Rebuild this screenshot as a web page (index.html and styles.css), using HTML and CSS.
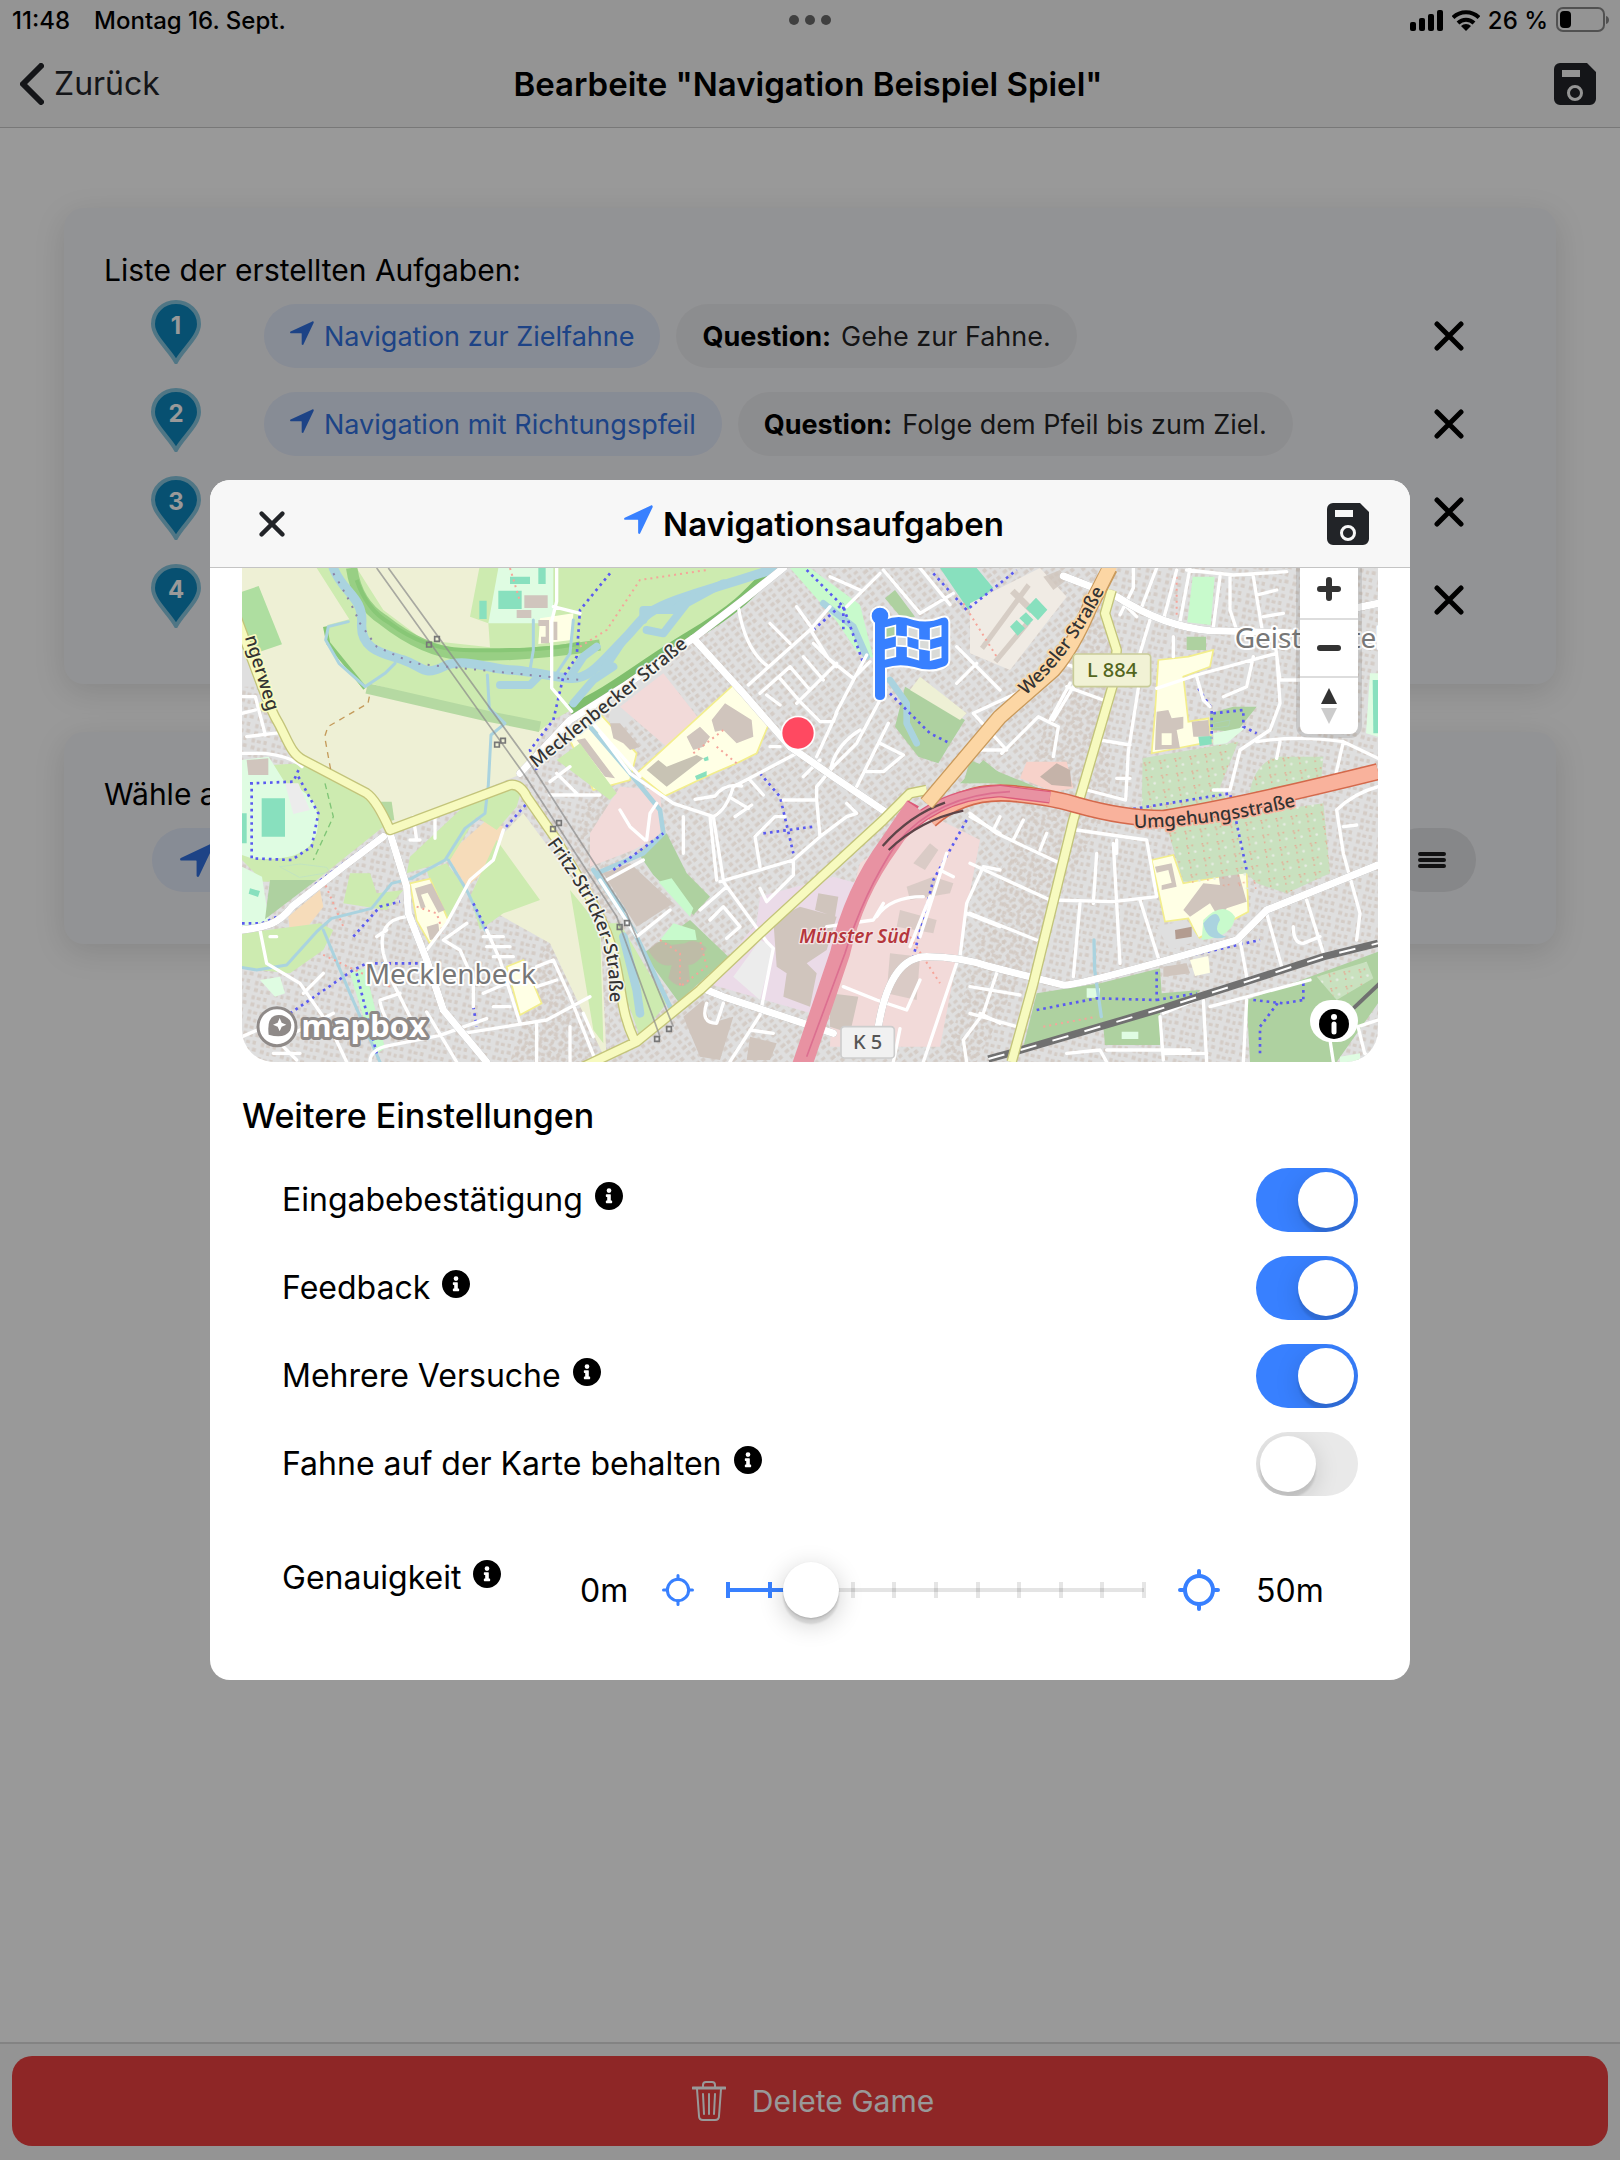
FILE: index.html
```html
<!DOCTYPE html>
<html lang="de">
<head>
<meta charset="utf-8">
<meta name="viewport" content="width=device-width, initial-scale=1">
<title>Bearbeite "Navigation Beispiel Spiel"</title>
<link rel="stylesheet" href="styles.css">
</head>
<body>
<svg class="defs" aria-hidden="true">
  <symbol id="i-nav" viewBox="0 0 24 24"><path d="M22.300.400.600 10.600c-.9.400-.6 1.700.4 1.700h10.300c.2 0 .4.200.4.400V23c0 1 1.300 1.300 1.700.4L23.700 1.800C24 .900 23.200 0 22.300.400z"/></symbol>
  <symbol id="i-close" viewBox="0 0 30 30"><path d="M3 3l24 24M27 3L3 27" fill="none" stroke="currentColor" stroke-width="5" stroke-linecap="round"/></symbol>
  <symbol id="i-save" viewBox="0 0 42 42"><path fill-rule="evenodd" d="M6 0h27l9 9v27a6 6 0 0 1-6 6H6a6 6 0 0 1-6-6V6a6 6 0 0 1 6-6zM8 7v7h18V7zM21 22a8 8 0 1 0 0 16 8 8 0 0 0 0-16zm0 3a5 5 0 1 1 0 10 5 5 0 0 1 0-10z"/></symbol>
  <symbol id="i-info" viewBox="8 8 496 496"><path d="M256 8C119 8 8 119 8 256s111 248 248 248 248-111 248-248S393 8 256 8zm0 110a42 42 0 1 1 0 84 42 42 0 0 1 0-84zm56 254c0 7-5 12-12 12h-88c-7 0-12-5-12-12v-24c0-7 5-12 12-12h12v-64h-12c-7 0-12-5-12-12v-24c0-7 5-12 12-12h64c7 0 12 5 12 12v100h12c7 0 12 5 12 12z"/></symbol>
  <symbol id="i-aim" viewBox="0 0 42 42"><g fill="none" stroke="currentColor" stroke-width="4" stroke-linecap="round"><circle cx="21" cy="21" r="14"/><path d="M21 2v5M21 35v5M2 21h5M35 21h5"/></g></symbol>
  <symbol id="i-pin" viewBox="0 0 52 64"><path d="M26 2C13 2 3 12 3 24c0 13 16 25 23 38 7-13 23-25 23-38C49 12 39 2 26 2z" fill="#0d86bc" stroke="#85c5de" stroke-width="4"/></symbol>
</svg>

<header class="topbar">
  <div class="status">
    <span>11:48</span><span class="date">Montag 16. Sept.</span>
    <svg class="dots" viewBox="0 0 42 10" width="42" height="10"><circle cx="5" cy="5" r="5"/><circle cx="21" cy="5" r="5"/><circle cx="37" cy="5" r="5"/></svg>
    <div class="signals">
      <svg viewBox="0 0 34 21" width="34" height="21"><rect y="12" width="6" height="9" rx="2"/><rect x="9" y="8" width="6" height="13" rx="2"/><rect x="18" y="4" width="6" height="17" rx="2"/><rect x="27" width="6" height="21" rx="2"/></svg>
      <svg viewBox="0 0 28 21" width="28" height="21"><g fill="none" stroke="#000" stroke-width="4"><path d="M1 7.500a18.500 18.500 0 0 1 26 0"/><path d="M6 13a11.500 11.500 0 0 1 16 0"/></g><path d="M14 21l-5-5a7 7 0 0 1 10 0z"/></svg>
      <span>26 %</span>
      <svg viewBox="0 0 54 26" width="54" height="26"><rect x="1" y="1" width="47" height="23" rx="6" fill="none" stroke="#888" stroke-width="2"/><rect x="4" y="4" width="11" height="17" rx="4"/><path d="M50 9c4 1 4 7 0 8z" fill="#888"/></svg>
    </div>
  </div>
  <div class="toolbar">
    <button class="plain back" type="button"><svg viewBox="0 0 24 42" width="24" height="42"><path d="M21 3L3 21l18 18" fill="none" stroke="currentColor" stroke-width="6" stroke-linecap="round" stroke-linejoin="round"/></svg>Zurück</button>
    <h1>Bearbeite "Navigation Beispiel Spiel"</h1>
    <button class="plain end" type="button" aria-label="Speichern"><svg width="42" height="42"><use href="#i-save"/></svg></button>
  </div>
</header>

<main class="page">
  <section class="card">
    <h2>Liste der erstellten Aufgaben:</h2>
    <ol class="tasks">
      <li><span class="pin"><svg width="52" height="64"><use href="#i-pin"/></svg><b>1</b></span>
        <span class="chip blue"><svg width="24" height="24"><use href="#i-nav"/></svg>Navigation zur Zielfahne</span>
        <span class="chip"><b>Question:</b> Gehe zur Fahne.</span>
        <button class="plain remove" type="button" aria-label="Entfernen"><svg width="30" height="30"><use href="#i-close"/></svg></button></li>
      <li><span class="pin"><svg width="52" height="64"><use href="#i-pin"/></svg><b>2</b></span>
        <span class="chip blue"><svg width="24" height="24"><use href="#i-nav"/></svg>Navigation mit Richtungspfeil</span>
        <span class="chip"><b>Question:</b> Folge dem Pfeil bis zum Ziel.</span>
        <button class="plain remove" type="button" aria-label="Entfernen"><svg width="30" height="30"><use href="#i-close"/></svg></button></li>
      <li><span class="pin"><svg width="52" height="64"><use href="#i-pin"/></svg><b>3</b></span>
        <button class="plain remove" type="button" aria-label="Entfernen"><svg width="30" height="30"><use href="#i-close"/></svg></button></li>
      <li><span class="pin"><svg width="52" height="64"><use href="#i-pin"/></svg><b>4</b></span>
        <button class="plain remove" type="button" aria-label="Entfernen"><svg width="30" height="30"><use href="#i-close"/></svg></button></li>
    </ol>
  </section>
  <section class="card">
    <h2>Wähle a</h2>
    <div class="picker">
      <button class="chip blue" type="button" aria-label="Navigation"><svg width="34" height="34"><use href="#i-nav"/></svg></button>
      <button class="chip menu" type="button" aria-label="Menü"><svg viewBox="0 0 28 16" width="28" height="16"><path d="M2 2h24M2 8h24M2 14h24" stroke="currentColor" stroke-width="4" stroke-linecap="round"/></svg></button>
    </div>
  </section>
</main>

<footer class="footer">
  <button class="delete" type="button"><svg class="line" viewBox="0 0 34 40" width="34" height="40" stroke="currentColor" stroke-width="2" stroke-linecap="round"><path d="M1 7h32" stroke-width="3"/><path d="M5 8l2 27q0 4 4 4h12q4 0 4-4l2-27M11 6V4q0-3 3-3h6q3 0 3 3v2M17 13v20M11 13l1 20M23 13l-1 20"/></svg>Delete Game</button>
</footer>

<div class="backdrop">
<div class="modal" role="dialog" aria-labelledby="dialog-title">
  <div class="modal-head">
    <button class="plain" type="button" aria-label="Schließen"><svg width="26" height="26"><use href="#i-close"/></svg></button>
    <h2 id="dialog-title"><svg width="29" height="29"><use href="#i-nav"/></svg>Navigationsaufgaben</h2>
    <button class="plain end" type="button" aria-label="Speichern"><svg width="42" height="42"><use href="#i-save"/></svg></button>
  </div>
  <div class="modal-body">
    <div class="map">
      <svg class="tiles" viewBox="96 24 3408 1482" preserveAspectRatio="xMidYMid slice">
        <defs>
          <pattern id="houses-a" width="46" height="62" patternUnits="userSpaceOnUse" patternTransform="rotate(-40)"><path d="M4 4h14v10H4zM24 6h12v12H24zM6 24h12v12H6zM27 30h13v9H27zM4 46h16v10H4zM26 48h12v10H26z" fill="#d0c5bd" opacity=".75"/></pattern>
          <pattern id="houses-b" width="62" height="44" patternUnits="userSpaceOnUse" patternTransform="rotate(14)"><path d="M4 4h10v12H4zM20 5h12v10H20zM40 3h10v12H40zM6 25h12v12H6zM26 27h9v11h-9zM43 24h12v11H43z" fill="#d0c5bd" opacity=".75"/></pattern>
          <pattern id="plots" width="46" height="44" patternUnits="userSpaceOnUse" patternTransform="rotate(-8)"><path d="M4 8h30M8 12v28" fill="none" stroke="#ee9a86" stroke-width="4" stroke-dasharray="5 10" opacity=".8"/><circle cx="28" cy="28" r="4" fill="#e6ece2"/></pattern>
        </defs>
        <rect x="96" y="24" width="3408" height="1482" fill="#dfdfdf"/>
        <path d="M900 1506L1170 600 1600 24H2700V720L2300 1506z" fill="url(#houses-a)"/>
        <path d="M96 380H1200V1506H96zM2650 24H3504V1506H2200z" fill="url(#houses-b)"/>

        <g class="land">
          <path fill="#eef0d5" d="M96 24H900L1080 260 1000 520 940 640 540 800 460 700 280 600 200 480 96 220z"/>
          <path fill="#cdebb0" d="M320 24H440L520 150 640 240 840 262 835 190 780 170 808 24H1680L1440 250 1030 480 985 515 480 370 460 390 345 235 352 195 418 178z"/>
          <path fill="#aedea0" d="M96 95l50-17 70 175-75 25-45-80z"/>
          <path fill="none" stroke="#98cf84" stroke-width="34" d="M425 24Q440 130 520 180 640 275 760 285 940 290 1170 255"/>
          <path fill="none" stroke="#88c776" stroke-width="12" d="M440 60Q470 150 540 190 640 265 760 270 1000 275 1110 250M345 200l10 50 110 135"/>
          <path fill="none" stroke="#7fbe6d" stroke-width="34" d="M1080 450C1200 400 1290 320 1440 230S1620 100 1690 24"/>
          <path fill="none" stroke="#b5d9a2" stroke-width="32" d="M470 385L840 470 990 500"/>
          <path fill="#b5d9a2" d="M510 725h35l8 55-20 5z"/>
          <path fill="#dffce2" d="M865 24H1030V190H835z"/><path fill="#88e0be" d="M865 92h70v55h-70zM900 50h60v22h-60zM985 24h22v48h-22zM808 122h22v55h-22z"/><path fill="#d0c5bd" d="M943 106h70v38h-70zM920 150h44v24h-44z"/>
          <path fill="#ffffe5" d="M990 175l100-15-5 80-100 12z"/><path fill="#d0c5bd" d="M985 180h32v70h-24v-20h14v-32h-22zM1030 185h12v55h-12z"/>
          <path fill="#cdebb0" d="M275 610L470 710 520 800 320 960 160 965 96 900V620z"/>
          <path fill="#dfdfdf" d="M96 385L180 440 210 520 260 590 96 575z"/><path fill="url(#houses-b)" d="M96 385L180 440 210 520 260 590 96 575z"/>
          <path fill="#dffce2" d="M96 600l80-10 50 80c70 20 100 60 98 120-4 90-80 115-200 105l-28-10zM96 920l60 30 20 130-80 30z"/>
          <path fill="#88e0be" d="M155 715h70v115h-70zM96 760h14v90H96zM120 985l30 8-6 18-28-10z"/><path fill="#d0c5bd" d="M110 600l65-5v50h-60z"/><path fill="#ececec" d="M225 670h40l35 80-50 12z"/>
          <path fill="#aed1a0" d="M180 960H320L165 1078z"/><path fill="#f6dcba" d="M235 1070l95-80 10 50-70 90-30-10zM740 860L830 780 880 800 830 930 770 980 720 900z"/>
          <path fill="#cdebb0" d="M96 1120L330 1090 370 1110 340 1170 240 1240 96 1225zM420 940l60 0 20 60 80-10-50 60-130-20zM600 890L750 750 850 680 940 670 920 740 860 810 800 770 720 900 590 940z"/>
          <path fill="#eef0d5" d="M870 830L940 760 1170 1070 1190 1506 1020 1150 860 1060z"/><path fill="#cdebb0" d="M860 840L990 1020 880 1060 810 1110 780 1010zM650 930l60-20 60 80-70 110zM1080 990l90 110 10 350-30-40z"/>
          <path fill="#ffffe5" stroke="#f3ee8c" stroke-width="5" d="M600 970l60-14 55 125-55 70-40-70zM890 1220l50-20 55 130-65 35z"/><path fill="#d0c5bd" d="M615 985l50-15 40 80-20 8-32-60-20 6 14 38-14 4zM650 1100l35-10 5 45-30 5z"/>
          <path fill="#c8facc" d="M420 1240l45-15 60 240 -30 20z"/><path fill="#dffce2" d="M150 1260l60-10 15 50-30 10z"/>
        </g>

        <g class="land" transform="translate(1170 0)">
          <path fill="#f2dad9" d="M60 440L190 340 300 480 200 560zM-30 820L60 680 180 690 190 820 100 870-30 920zM700 1200l80-290 200-150 160 80-120 620H690z"/>
          <path fill="#ffffe5" stroke="#f3ee8c" stroke-width="5" d="M110 640L400 375 505 495 470 580 410 610 340 640 195 708zM-100 520l80-80 130 140-20 80-110 30z"/>
          <path fill="#d0c5bd" d="M335 480l40-50 80 50 5 50-50 20-40-40-25 5zM260 530l40-30 30 30-20 30-30 10zM30 490l30 0 60 70-30 10-20-20-30-15zM-70 540l25-5 90 120-30-5z"/>
          <path fill="#c8c3b4" d="M140 630l35-30 25 20 90-35 20 10-110 85z"/><path fill="#88e0be" d="M1020 24h110l50 60-75 65zM285 648l35-15v15l-30 12zM310 595l14-6 2 12-12 3z"/>
          <path fill="#c8facc" d="M570 24h60l150 110 40 160-50-20-60-90z"/>
          <path fill="#aed1a0" d="M855 115l30-25 60 80-40 5zM885 500l30-120 180 100-50 80-30 50-60-20zM1080 670l70-70 50 40v30zM115 880l85-60 60 120 70 70-50 55-120-120zM130 1180l140-100 115 110-150 135z"/>
          <path fill="#eef0d5" d="M930 390l30-40 140 110-20 20z"/><path fill="#c8facc" d="M175 965l40-10 65 90-10 25zM180 1140l40-50 65 20 5 30z"/>
          <path fill="#c5b3a9" d="M145 1170q30-40 70-15l40-5q30-20 65 15-25 50-55 50l5 50q-30 30-65-10l10-40q-40 10-70-45z" opacity=".7"/>
          <path fill="#ebdbe8" d="M700 950l70 20-100 400-350-100 150-180 10-80z"/><path fill="#d0c5bd" d="M520 1080l80-40 110 30-30 100-60 40 30 30-20 100-80-30 10-70-30-20zM655 1000l60 10-10 60-60-20zM690 1300l85 10-25 110-60-20zM250 1370l60-50 20 70 70-20-40 130-60-10zM450 1430l80 20-20 50h-70zM10 940l80-30 130 120-110 70z"/>
          <path fill="#ececec" d="M400 1250l80-110 40 20-40 160z"/>
          <path fill="#d0c5bd" opacity=".7" d="M940 910l50-60 25 20-40 60zM920 980l80-30 60 20-10 30-120 20zM900 1050l110 30-10 40-110-20zM870 1180l90 10-10 130-90-20z"/>
          <path fill="#cdebb0" d="M-130 600l70-50 110 150-20 20zM0 1090l60 0 140 240-80 100z"/>
        </g>

        <g class="land" transform="translate(2340 0)">
          <path fill="#f0ebe4" d="M-60 130L150 24 230 110 60 330-60 280z"/><path fill="#d0c5bd" opacity=".8" d="M-30 260l140-190 12 10-140 190zM10 300l100-120 12 10-100 120zM160 50l50-20 20 30-40 30zM60 100l14-14 60 60-14 14z"/>
          <path fill="#88e0be" d="M60 200l20-20 25 25-22 22zM88 175l20-18 22 22-18 18zM108 145l30-32 34 36-28 32z"/>
          <path fill="#c8facc" d="M608 50h66l-12 145-70-8z"/><path fill="#aed1a0" d="M590 230h58v40h-58zM660 460l70-20 70 0-60 75-80-5z"/><path fill="#dffce2" d="M670 520l100-20-60 50-40 5zM1140 340h24v190l-36-10z"/><path fill="#88e0be" d="M1148 360h16v160h-14z"/>
          <path fill="#f7d2ca" d="M110 605l120 0 20 80-60 10-100-40z"/><path fill="#c5b3a9" d="M150 650l50-40 40 20 5 50-60-5z"/>
          <path fill="#ffffe5" stroke="#f3ee8c" stroke-width="5" d="M505 300l90-10 75-20-10 50-80 30 15 135 60-10 10 70-180 35 10-120zM485 900l65-15 30 85 190-35 5 120-150 80-30-60-70 10z"/>
          <path fill="#d0c5bd" fill-rule="evenodd" d="M500 455l35-5 10 25 35-5v35l-20 5 10 55-75 5 2-60zM515 520v35h30v-35zM605 485l50-5 5 50-50 0zM495 920l50-10 15 70-45 10v-14l30-8-10-38-35 8zM580 1050l60-80 50 5-5-35 60-5 25 90-60 20-20 35-30-50-60 40z"/>
          <path fill="#88e0be" d="M625 530l40-2v25l-36 5z"/><path fill="#c8facc" d="M640 1080q60-60 95-10-5 60-100 70z"/><path fill="#aad3df" d="M640 1090q40-50 50-10-25 40 20 50-60 20-70-40z"/>
          <path fill="#c9e1bf" d="M458 595L745 545 690 680 720 745 455 750zM780 690q20-90 90-100l130 0-10 110-215 40zM530 800L740 760 800 760 1000 730 1020 940 890 1000 800 970 770 940 580 965z"/><path fill="url(#plots)" d="M458 595L745 545 690 680 720 745 455 750zM780 690q20-90 90-100l130 0-10 110-215 40zM530 800L740 760 1000 730 1020 940 890 1000 580 965z"/>
          <path fill="#dfdfdf" d="M500 1100l90-20 40 60-90 30z"/><path fill="#b39c90" d="M555 1110l50-10v30l-48 8z"/>
          <path fill="#aed1a0" d="M140 1300L330 1270 510 1225 515 1300 630 1290 600 1330 100 1460zM340 1400l170-50v105H345zM770 1320L1164 1175V1330L1040 1506H780z"/><path fill="#c9e1bf" d="M980 1250l150-45 20 50-110 65z"/><path fill="url(#plots)" d="M980 1250l150-45 20 50-110 65z"/><path fill="#dffce2" d="M395 1415l50 0v22h-50zM290 1285h40v28h-40zM1050 1490l60-10v26h-60z"/>
          <path fill="#ffffe5" d="M600 1200l55-12 5 50-45 10z"/><path fill="#d0c5bd" d="M520 1220l70-10 10 30-80 10z"/>
          <path fill="#aed1a0" d="M-60 600L160 690 0 668-80 670z"/>
        </g>

        <g class="water">
          <path stroke-width="28" d="M370 24C400 100 460 110 455 190S520 280 580 300 640 350 700 320 850 330 900 330 1020 350 1080 355 1180 300 1240 240 1290 160 1400 120 1500 90 1700 24"/>
          <path stroke-width="24" d="M870 375H960L990 345M1080 350l40-60 40-30M1090 430l60-70 60-40M1310 210l50 10 70-90 110-60M1180 330l60-90M1300 180v-30h90l60-40"/>
          <path stroke-width="9" d="M415 185l-60 15-8 40 40 70 78 70 60-40 30-30M832 345l6 100 47 45-42 35-8 150-10 85-60 45-60 95-100 55-60 15-60 75-120 30-45 40-90 100-90 15-60-10M340 1110l80 190 90 206M715 900l60 100 50 110M970 180v90l-10 60M1090 180l-10 100-40 60"/>
          <path stroke-width="14" d="M1140 500l120 140 90 110 10 70-60 60-140 60 80 110M1150 930l120 180 110 230"/>
          <path stroke-width="26" d="M1240 1130l40 160 10 70"/>
          <path stroke-width="20" d="M1840 130l90 70 40 90M2040 360l50 70 0 60 30 60"/><path stroke-width="10" d="M2652 1140l2 90 20 140"/>
          <path fill="#aad3df" stroke="none" d="M210 920l60-8 80 10 10 15-90 15zM3010 490l50-10-4 18-44 6z"/>
        </g>
        <path class="foot-red" d="M1110 260l80-50 100-150 200-30M340 960l60 140M540 1280L330 1180M620 1040l60 20 20 60M1520 560l60 50M1450 580l90-70M2260 130l100 160M2900 50v120M900 24l30 100M1350 1140l60 40 0 100 80-60-20-80M2100 1130l90 140M2500 1400l160-30"/>
        <path class="foot-blue" d="M1200 40l-90 110-10 140-40 60-30 130-70 90 20 60M120 670l130-5 20-45M265 650l60 110-20 100-60 40-120-5 0-230M96 1090l60 0 70-30 100-95 190-140M240 1360l190-130 40-20 180 0M430 1130l80-90 60-15M440 1240l60 240M960 720l-80 90M790 1030l40 80M1210 930l150-110M1650 640l60 70 40 170M1660 820l150-20M1790 30l110 110 60 170M1900 140v80M1810 210l90-80M2040 400l120 120 60 30M2270 780l-100 180-60 230M2170 40l100 110 150-120M2965 385l40 60v90M3010 460l90-10 0 50 40 20M2750 750l310-50 20 90 30 140M2480 1350l180-35 180 5 0-90M2840 1320l120-20M3130 1320l90 10 60-10M3150 1480v-80l60-80M3280 1270v60M2700 1240l450-100M790 1340l10 60"/>

        <g class="minor">
          <path d="M96 410h40l30 115M96 460l40-10M110 530l100-12M96 580h70q80 10 110 40M610 770l10 70M675 765v70M600 840h30M1040 24v100l-15 60 0 200 60 70M1030 140l80 20M1020 705h150M1140 480l150 170M1020 665l60-45M1040 640l60 60M150 1110l20 100 100 60 90 130 50 106M180 1130l20 0M280 1300l60-60M230 1430l140-70M96 1430l140-60M160 1400l100 100M190 1480h80M590 1070q-90 10-70 110l20 70 60 120M650 1170l60-80 70-130 70-60 30-90M500 1130l30-20M700 1140l50 30 40 90 0 80M830 1110l40 90 60 190M820 1130h60M830 1160h70M850 1190h60M820 1300l70-30M850 1340h50M700 1140l70-50M760 1420l250-40 130-70M980 1220l50-20 50 110 80 200M980 1280l60-20M1080 1400v106M1120 1360l30 70M530 1380q-20-40-20-60l60-20M480 1506q0-40 60-50l150-30 140-50M980 1390v116M740 1506l-90-150"/>
          <path transform="translate(1170 0)" d="M415 140q20 130 90 180M510 190l60 60M590 140l50 70M445 375l185-165 60-70M480 400l90-80M635 215l50 80 75 60 50-50M540 355l60 70 60 60 40 0 10-30 90-170M570 320l60 70M610 290l60 70M640 250l70 70M590 430l120-120M500 405l40 30M0 520l90 120 130 90 120 40q40-20 60-90l190-100M285 718l60-10q30-40 80-30M395 715l50 30M405 770l50-35M450 660l40 45M340 770l30 190M330 770l20 190M250 770v110M60 750l30 50 45 40M140 840l10-80 20-30M550 720h100l0-40 50-60 70-70 70-130M650 720l10 110-80 70-220 65M370 965l130 180 20 20-40 200-90 140M660 830l80-60 30-10-30-30M465 830l60-60h30M465 830l15 90M580 905l0 40-80 80-20-40M300 1050l80-70M330 1080l40-40 50 60-40 35M610 650l50-50M540 560l-30 0M650 590l60-130M690 640q10-80 90-130M770 680l95-190M840 550l70 35-60 50-50 0M960 24l90 110M850 30l110 130 100-60M740 140l100-100M690 50l90 40M1070 260l130 130M1070 370l60-60M880 1506l20-100M730 1280l100 40 90 30 40-90M680 1100l140-20 30-50M830 1070q40-60 140-60M960 1130l80-250M1020 930l40 20M930 1160l60-150M0 960l110 170 100-80M20 960l110-60M320 1330q-20 60 30 60l20-60M450 1410l70 10M1080 1190l20-160 50-110 50 10M1100 1060l100 40M1070 1210l-100 296M1190 1240l-40 120-60 80 10 66M1140 1360l60 30M1110 770l90 50"/>
          <path transform="translate(2340 0)" d="M380 110l60 60M430 24v60l-40 80M500 24l-50 130M560 30l-40 150M600 24l-30 160M690 50l-20 150M720 50v100l20 60M790 50l30 180M590 30l140 15 160-10M800 105l60-15M820 170l60-10M850 210l20 150h60M860 280L620 345 500 385M620 350l20 70 20 20M790 290l-20 90-70 30M550 290v-60M480 180l-30 100M445 385l-30 190-8 145M405 720L290 690M330 540l90 15M380 655h40M180 480l60-110M250 320l-60-20M230 380l110 40M-40 570l90 0-100-110 130-60M35 580l110-110 60 30-15 90M190 480l60-100M860 280l10 150-30 80-90 60-30 120-50 0M800 545q120-20 260 0l104 50M870 545l-10 50M1060 545l-30 130M1040 750q50-50 124-70M1040 750l20 130 50 180-10 80M1060 800l40-5M260 810l210 30 30 170M500 1010l-130 15-180-5M370 850l20 360M320 880l-10 150M380 840v40M270 1030l-20 220M450 1020l60 190M-60 760l80 60 190 90M10 810l20-40M70 840l30-60M150 870l20-50M-60 910l240 110M-60 1060l200 80M-60 1280l150 25M-60 1360l140 40M830 1060l45 160M950 1020l50 160M910 1100q0 50 30 50l50-20M750 1140l20 110M510 1370l10 130M520 1360l120-50M640 1320l10 186M770 1320l-10 186M650 1480h-130M230 1480l100-10 20 36M350 1470h250M1164 1380l-60 20 20 80 40 26M660 1340l300-80M1020 1440l10 66"/>
        </g>

        <g class="major">
          <path d="M96 1110c80-10 110-20 150-70L400 920 520 830"/>
          <path d="M540 820L590 980 595 1060 650 1200 700 1350 830 1506"/>
          <path d="M930 640L1080 480 1240 380 1450 235 1600 120 1720 24"/>
          <path d="M1450 235L1600 400 1740 560 1870 650 2040 765"/>
          <path d="M1490 1290L1540 1310 1780 1390 1870 1420"/>
          <path d="M2005 1400Q2040 1190 2150 1190 2250 1190 2340 1220L2560 1275Q2600 1280 3080 1140 3120 1100 3170 1050L3504 915"/>
          <path d="M2560 48L2720 110Q2860 200 3000 212L3300 220 3360 160 3504 130"/>
        </g>
        <g class="rail"><path d="M2335 1497L2415 1475 2840 1350 3140 1255 3340 1190 3504 1150"/><path class="thin" d="M3430 1345l80-76"/><path class="dash" d="M2335 1497L2415 1475 2840 1350 3140 1255 3340 1190 3504 1150"/></g>
        <g class="road sec">
          <path class="case" d="M60 120C140 330 170 430 200 480S240 580 280 600L470 700Q500 720 540 810L900 675Q930 670 950 710L1040 840C1100 950 1180 1060 1210 1180S1230 1350 1275 1445M1100 1530L1280 1445 1470 1290 1650 1120 2020 780 2100 700 2150 690M2405 1506L2470 1270 2590 780 2710 370 2720 270 2685 160 2705 90"/>
          <path d="M60 120C140 330 170 430 200 480S240 580 280 600L470 700Q500 720 540 810L900 675Q930 670 950 710L1040 840C1100 950 1180 1060 1210 1180S1230 1350 1275 1445M1100 1530L1280 1445 1470 1290 1650 1120 2020 780 2100 700 2150 690M2405 1506L2470 1270 2590 780 2710 370 2720 270 2685 160 2705 90"/>
        </g>
        <g class="road trunk"><path class="case" d="M2160 780Q2260 690 2400 700 2520 710 2600 735 2740 775 2860 775 3080 740 3504 635"/><path d="M2160 780Q2260 690 2400 700 2520 710 2600 735 2740 775 2860 775 3080 740 3504 635"/></g>
        <g class="road motor"><path class="case" d="M1780 1506L1890 1180Q1940 1000 2040 860L2110 730M2040 860Q2160 705 2370 693L2520 712"/><path class="wide" d="M1775 1520L1890 1180Q1930 1000 2040 850L2115 740"/><path d="M2040 860Q2160 705 2370 693L2520 712"/><path class="lane" d="M1790 1490L1905 1180Q1960 1000 2060 850 2180 705 2400 695"/></g>
        <path d="M2018 858Q2100 765 2205 728M2036 870Q2130 780 2260 752" fill="none" stroke="#5d4448" stroke-width="7"/>
        <g class="road prim"><path class="case" d="M2150 730L2370 470 2530 330Q2590 260 2640 140L2700 24"/><path d="M2150 730L2370 470 2530 330Q2590 260 2640 140L2705 10"/></g>
        <path d="M500 24L940 640 1220 1070 1350 1430M535 24L960 610 1250 1060 1390 1400" fill="none" stroke="#8a8a8a" stroke-width="5" opacity=".7"/>
        <path d="M650 247h14v14h-14zM674 230h14v14h-14zM854 547h14v14h-14zM872 535h14v14h-14zM1022 800h14v14h-14zM1040 782h14v14h-14zM1222 1094h14v14h-14zM1244 1082h14v14h-14zM1334 1430h14v14h-14zM1370 1400h14v14h-14z" fill="none" stroke="#777" stroke-width="5"/>
        <path d="M370 40q50 80 80 150l50 70 110 50 100 10 400 40" fill="none" stroke="#8b83a8" stroke-width="6" stroke-dasharray="6 22"/>
        <path d="M478 410l-4 20-120 70-10 30 20 110" fill="none" stroke="#c49a5a" stroke-width="4" stroke-dasharray="18 16"/>
        <path d="M345 670l25 100-60 130" fill="none" stroke="#7fc576" stroke-width="4" stroke-dasharray="18 12"/>

        <defs>
          <path id="t-fritz" d="M1010 850C1090 960 1140 1040 1170 1130S1195 1230 1200 1330"/>
          <path id="t-meck" d="M978 625L1280 385 1450 245"/>
          <path id="t-wes" d="M2446 406C2546 326 2626 206 2700 60"/>
          <path id="t-umg" d="M2772 804Q3000 800 3270 736"/>
          <path id="t-weg" d="M104 232L180 480"/>
        </defs>
        <g class="street">
          <text><textPath href="#t-fritz">Fritz-Stricker-Straße</textPath></text>
          <text><textPath href="#t-meck">Mecklenbecker Straße</textPath></text>
          <text class="on-prim"><textPath href="#t-wes">Weseler Straße</textPath></text>
          <text class="on-trunk"><textPath href="#t-umg">Umgehungsstraße</textPath></text>
          <text class="on-sec"><textPath href="#t-weg">ngerweg</textPath></text>
        </g>
        <text class="place" x="464" y="1273">Mecklenbeck</text>
        <text class="place" x="3074" y="265">Geistviertel</text>
        <text class="exit" x="1768" y="1150">Münster Süd</text>
        <g class="shield"><rect x="2590" y="282" width="232" height="98" rx="10" fill="#f1f2d5" stroke="#c9cc98" stroke-width="5"/><text x="2706" y="352" fill="#53661d">L 884</text>
        <rect x="1893" y="1400" width="160" height="94" rx="10" fill="#f1f1f1" stroke="#cdcdcd" stroke-width="5"/><text x="1973" y="1466" fill="#555">K 5</text></g>

        <circle cx="1764" cy="519" r="52" fill="#fff"/><circle cx="1764" cy="519" r="47" fill="#ff4961"/>
        <g transform="translate(1170 0)"><g stroke="#fff" stroke-width="12" fill="#fff" stroke-linejoin="round"><circle cx="840" cy="168" r="25"/><path d="M825 168h30v240q-2 12-15 12t-15-12z"/><path d="M855 180q40-18 85 0 45 12 85-6 18-6 20 12v115q0 12-12 18-40 18-90 2-45-12-88 2z"/></g>
        <g fill="#3880ff"><circle cx="840" cy="168" r="25"/><path d="M825 168h30v240q-2 12-15 12t-15-12z"/><path d="M855 180q40-18 85 0 45 12 85-6 18-6 20 12v115q0 12-12 18-40 18-90 2-45-12-88 2z"/></g>
        <g fill="#d9dbd8" stroke="#fff" stroke-width="5"><path fill="#aed1a0" d="M857 204l29-7v30l-29 7z"/><path d="M923 199l32 9v29l-32-9zM992 206l30-8v30l-30 8zM890 229l30 3v27l-30-2zM958 240l30 2v28l-30-5zM857 270l29-7v26l-29 7zM923 262l32 9v27l-32-9zM992 270l30-8v30l-30 8z"/></g></g>

        <g class="logo"><circle cx="201" cy="1400" r="57" fill="#fff" stroke="#8f8a88" stroke-width="9"/><path d="M176 1424q-8-66 40-58 38 12 24 46-18 26-64 12z" fill="#8f8a88"/><path d="M209 1374l6 14 14 6-14 6-6 14-6-14-14-6 14-6z" fill="#fff"/><text x="274" y="1430">mapbox</text></g>
      </svg>
      <div class="zoom">
        <button type="button" aria-label="Vergrößern"><svg viewBox="0 0 24 24" width="24" height="24"><path d="M3 12h18M12 3v18" stroke="#333" stroke-width="6" stroke-linecap="round"/></svg></button>
        <button type="button" aria-label="Verkleinern"><svg viewBox="0 0 24 24" width="24" height="24"><path d="M3 12h18" stroke="#333" stroke-width="6" stroke-linecap="round"/></svg></button>
        <button type="button" aria-label="Norden"><svg viewBox="0 0 16 36" width="16" height="36"><path d="M8 0l8 16H0z" fill="#333"/><path d="M0 20h16L8 36z" fill="#ccc"/></svg></button>
      </div>
      <button class="attribution" type="button" aria-label="Quellenangabe"><svg viewBox="0 0 30 30" width="30" height="30"><circle cx="15" cy="15" r="15"/><path d="M15 15v8" stroke="#fff" stroke-width="5" stroke-linecap="round"/><circle cx="15" cy="8" r="3" fill="#fff"/></svg></button>
    </div>
    <h3>Weitere Einstellungen</h3>
    <div class="settings">
      <div class="row"><div class="name"><label for="s1">Eingabebestätigung</label><button class="plain" type="button" aria-label="Info"><svg width="28" height="28"><use href="#i-info"/></svg></button></div><input class="toggle" id="s1" type="checkbox" role="switch" checked></div>
      <div class="row"><div class="name"><label for="s2">Feedback</label><button class="plain" type="button" aria-label="Info"><svg width="28" height="28"><use href="#i-info"/></svg></button></div><input class="toggle" id="s2" type="checkbox" role="switch" checked></div>
      <div class="row"><div class="name"><label for="s3">Mehrere Versuche</label><button class="plain" type="button" aria-label="Info"><svg width="28" height="28"><use href="#i-info"/></svg></button></div><input class="toggle" id="s3" type="checkbox" role="switch" checked></div>
      <div class="row"><div class="name"><label for="s4">Fahne auf der Karte behalten</label><button class="plain" type="button" aria-label="Info"><svg width="28" height="28"><use href="#i-info"/></svg></button></div><input class="toggle" id="s4" type="checkbox" role="switch"></div>
      <div class="row accuracy">
        <div class="name"><label for="acc">Genauigkeit</label><button class="plain" type="button" aria-label="Info"><svg width="28" height="28"><use href="#i-info"/></svg></button></div>
        <span class="min">0m</span>
        <svg class="aim" width="32" height="32"><use href="#i-aim"/></svg>
        <div class="slider">
          <div class="track"></div>
          <div class="ticks"><i class="on"></i><i class="on"></i><i class="on"></i><i></i><i></i><i></i><i></i><i></i><i></i><i></i><i></i></div>
          <input id="acc" type="range" min="0" max="50" step="5" value="10">
        </div>
        <svg class="aim" width="42" height="42"><use href="#i-aim"/></svg>
        <span class="max">50m</span>
      </div>
    </div>
  </div>
</div>
</div>
</body>
</html>
```
FILE: styles.css
```css
* { box-sizing: border-box; }
body {
  margin: 0;
  min-height: 100vh;
  display: flex;
  flex-direction: column;
  background: #fff;
  color: #000;
  font-family: Inter, "Liberation Sans", sans-serif;
  font-size: 30px;
}
svg { display: block; flex: none; fill: currentColor; }
svg.line { fill: none; }
button { font: inherit; color: inherit; cursor: pointer; }
.defs { position: absolute; width: 0; height: 0; }
.plain { border: 0; padding: 0; background: none; display: flex; align-items: center; }
h1, h2, h3 { margin: 0; }

/* top bar */
.topbar { background: #f7f7f7; border-bottom: 1px solid #c8c8c8; }
.status {
  position: relative;
  display: flex;
  align-items: center;
  height: 40px;
  padding: 0 10px 0 12px;
  font-size: 24px;
  font-weight: 500;
}
.status .date { padding-left: 24px; }
.dots { position: absolute; left: 50%; margin-left: -21px; color: #6b6b6b; }
.signals { display: flex; align-items: center; gap: 8px; margin-left: auto; }
.toolbar {
  display: grid;
  grid-template-columns: 1fr auto 1fr;
  align-items: center;
  height: 87px;
  padding: 0 24px 0 20px;
}
.toolbar h1 { font-size: 33px; font-weight: 600; }
.back { gap: 10px; color: #222428; font-size: 32px; }
.end { justify-self: end; color: #222428; }

/* cards */
.page { flex: 1; display: flex; flex-direction: column; gap: 48px; padding: 80px 64px; }
.card {
  padding: 42px 40px 40px;
  border-radius: 20px;
  background: #f4f5f8;
  box-shadow: 0 8px 32px rgba(0, 0, 0, .12);
}
.card h2 { padding-bottom: 2px; font-size: 30px; font-weight: 400; line-height: 40px; }
.tasks { list-style: none; margin: 0; padding: 0 52px 0 46px; }
.tasks li { display: flex; align-items: center; gap: 16px; height: 88px; }
.pin { display: grid; justify-items: center; width: 52px; height: 72px; margin-right: 46px; }
.pin svg, .pin b { grid-area: 1 / 1; }
.pin b { color: #fff; font-size: 24px; line-height: 52px; font-weight: 700; }
.chip {
  display: flex;
  align-items: center;
  gap: 10px;
  height: 64px;
  padding: 0 26px;
  border: 0;
  border-radius: 32px;
  background: rgba(0, 0, 0, .04);
  color: rgba(0, 0, 0, .87);
  font-size: 27px;
}
.chip b { color: #000; font-weight: 700; }
.chip.blue { background: rgba(56, 128, 255, .1); color: #3171e0; }
.tasks .chip svg { margin-bottom: 6px; }
.remove { margin-left: auto; }
.picker { display: flex; justify-content: space-between; align-items: center; height: 88px; padding: 0 40px 0 48px; }
.picker .blue { padding: 0 28px; }
.picker .menu { background: #e0e1e4; padding: 0 30px; }

/* footer */
.footer { background: #f7f7f7; border-top: 2px solid #dadada; padding: 12px 12px 14px; }
.delete {
  display: flex;
  align-items: center;
  justify-content: center;
  gap: 26px;
  width: 100%;
  height: 90px;
  padding: 0 0 0 6px;
  border: 0;
  border-radius: 20px;
  background: #ed4040;
  color: #fff;
  font-size: 30px;
}

/* dialog */
.backdrop { position: fixed; inset: 0; display: grid; place-items: center; background: rgba(0, 0, 0, .4); }
.modal { width: min(1200px, 100%); max-height: 100%; overflow: hidden; border-radius: 20px; background: #fff; }
.modal-head {
  display: grid;
  grid-template-columns: 1fr auto 1fr;
  align-items: center;
  height: 88px;
  padding: 0 41px 0 49px;
  border-bottom: 1px solid #c4c4c4;
  background: #f7f7f7;
  color: #222428;
}
.modal-head h2 { display: flex; align-items: center; gap: 10px; color: #000; font-size: 33px; font-weight: 600; }
.modal-head h2 svg { color: #3880ff; margin-bottom: 8px; }
.modal-body { padding: 0 32px 46px; }
.modal-body h3 { padding-top: 36px; line-height: 36px; font-size: 34px; font-weight: 500; }
.settings { padding: 22px 20px 0 40px; font-size: 32px; }
.row { display: flex; align-items: center; justify-content: space-between; height: 88px; }
.name { display: flex; align-items: flex-start; gap: 12px; line-height: 36px; }
.toggle {
  appearance: none;
  width: 102px;
  height: 64px;
  margin: 0;
  padding: 4px;
  border-radius: 32px;
  background: #e9e9e9;
  overflow: hidden;
}
.toggle::before {
  content: "";
  display: block;
  width: 56px;
  height: 56px;
  border-radius: 50%;
  background: #fff;
  box-shadow: 0 6px 24px rgba(0, 0, 0, .15), 0 6px 2px rgba(0, 0, 0, .1);
}
.toggle:checked { background: #3880ff; }
.toggle:checked::before { margin-left: auto; }

.accuracy { margin-top: 38px; }
.accuracy .name { flex: none; width: 298px; height: 60px; }
.aim { color: #3880ff; }
.min { width: 82px; flex: none; }
.max { width: 102px; flex: none; margin-left: 36px; }
.slider { flex: 1; display: grid; align-items: center; margin: 0 6px; height: 56px; }
.slider > * { grid-area: 1 / 1; }
.track { height: 4px; margin: 0 28px; background: linear-gradient(90deg, #3880ff 20%, #e4e4e4 20%); }
.ticks { display: flex; justify-content: space-between; margin: 0 26px; }
.ticks i { width: 4px; height: 16px; background: rgba(0, 0, 0, .1); }
.ticks .on { background: #3880ff; }
.slider input { appearance: none; width: 100%; height: 56px; margin: 0; background: none; }
.slider input::-webkit-slider-thumb {
  appearance: none;
  width: 56px;
  height: 56px;
  border-radius: 50%;
  background: #fff;
  box-shadow: 0 1px 2px rgba(0, 0, 0, .15), 0 6px 2px rgba(0, 0, 0, .1), 0 6px 26px rgba(0, 0, 0, .2);
}

/* map */
.map { position: relative; height: 494px; overflow: hidden; border-radius: 0 0 32px 32px; }
.tiles { width: 100%; height: 100%; }
.water path { fill: none; stroke: #aad3df; stroke-linecap: round; stroke-linejoin: round; }
.foot-red { fill: none; stroke: #f5a59a; stroke-width: 6; stroke-dasharray: 6 12; }
.foot-blue { fill: none; stroke: #5a5af0; stroke-width: 8; stroke-dasharray: 8 12; }
.minor path { fill: none; stroke: #fff; stroke-width: 10; stroke-linecap: round; stroke-linejoin: round; }
.major { filter: drop-shadow(0 0 2px #999); }
.major path { fill: none; stroke: #fff; stroke-width: 22; stroke-linecap: round; stroke-linejoin: round; }
.rail path { fill: none; stroke: #707070; stroke-width: 22; }
.rail .thin { stroke-width: 12; }
.rail .dash { stroke: #fff; stroke-width: 6; stroke-dasharray: 50 50; }
.road path { fill: none; stroke-linejoin: round; }
.sec path { stroke: #f7fabf; stroke-width: 24; }
.sec .case { stroke: #c3c47a; stroke-width: 32; }
.prim path { stroke: #fcd6a4; stroke-width: 40; }
.prim .case { stroke: #c99a5c; stroke-width: 48; }
.trunk path { stroke: #f9b29c; stroke-width: 42; }
.trunk .case { stroke: #d4694b; stroke-width: 52; }
.motor path { stroke: #e892a2; stroke-width: 30; }
.motor .wide { stroke-width: 60; }
.motor .case { stroke: #dc5b7a; stroke-width: 38; }
.motor .lane { stroke: #dc6f90; stroke-width: 5; }
.tiles text { font-family: "Noto Sans", sans-serif; paint-order: stroke; stroke-linejoin: round; }
.street text { font-size: 55px; font-weight: 500; fill: #333; stroke: #f4f4ee; stroke-width: 10; }
.street .on-prim { stroke: #fcd6a4; }
.street .on-trunk { stroke: #f9b29c; }
.street .on-sec { stroke: #f7fabf; }
.place { font-size: 84px; fill: #777; stroke: #fff; stroke-width: 12; }
.tiles .exit { font-size: 57px; font-style: italic; font-weight: 600; fill: #b5363c; stroke: #f4e4e4; stroke-width: 8; }
.shield text { font-size: 60px; text-anchor: middle; font-weight: 500; }
.tiles .logo text { font-family: "Open Sans", sans-serif; font-size: 93px; font-weight: 700; fill: #fff; stroke: #8f8a88; stroke-width: 18; }
.zoom {
  position: absolute;
  top: -8px;
  right: 20px;
  width: 58px;
  border-radius: 8px;
  background: #fff;
  box-shadow: 0 0 0 4px rgba(0, 0, 0, .1);
}
.zoom button { display: grid; place-items: center; width: 58px; height: 58px; padding: 0; border: 0; background: none; }
.zoom button + button { border-top: 2px solid #ddd; }
.attribution {
  position: absolute;
  right: 20px;
  bottom: 20px;
  display: grid;
  place-items: center;
  width: 48px;
  height: 42px;
  padding: 6px 0 0;
  border: 0;
  border-radius: 24px;
  background: #fff;
}
```
